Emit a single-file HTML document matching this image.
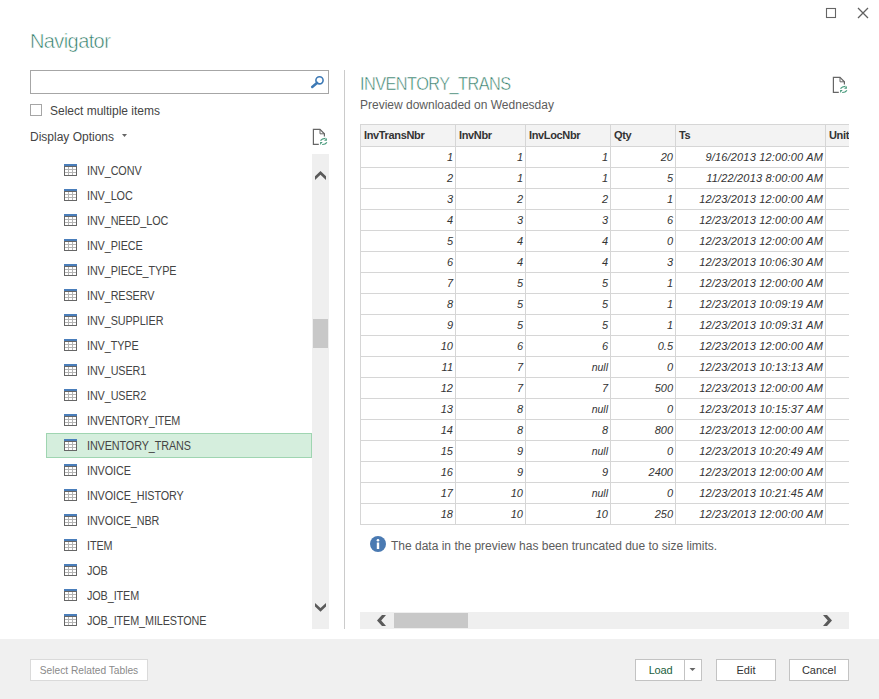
<!DOCTYPE html>
<html><head><meta charset="utf-8">
<style>
*{box-sizing:border-box;margin:0;padding:0}
html,body{width:879px;height:699px;overflow:hidden;background:#fff;font-family:"Liberation Sans",sans-serif;color:#333}
.abs{position:absolute}
#title{position:absolute;left:30px;top:29px;font-size:20px;color:#2f7c67;line-height:24px;white-space:nowrap;letter-spacing:-0.6px;-webkit-text-stroke:0.55px #fff}
#search{position:absolute;left:30px;top:70px;width:299px;height:24px;border:1px solid #a6a6a6;background:#fff}
#cb{position:absolute;left:30px;top:104px;width:12px;height:12px;border:1px solid #a6a6a6}
.lbl{position:absolute;font-size:12px;color:#444;white-space:nowrap;line-height:14px}
#listwrap{position:absolute;left:0;top:154px;width:340px;height:485px;overflow:hidden}
.li{position:absolute;left:46px;width:266px;height:25px}
.li.sel{background:#d5eedd;border:1px solid #9fd5b1}
.li .ti{position:absolute;left:18px;top:6px}
.li.sel .ti{left:17px;top:5px}
.lt{position:absolute;left:41px;top:6px;font-size:12px;line-height:14px;color:#444;white-space:nowrap;letter-spacing:-0.1px;transform-origin:0 0;transform:scaleX(0.9)}
.li.sel .lt{left:40px;top:5px}
#vsb{position:absolute;left:312px;top:154px;width:17px;height:475px;background:#efefef}
#vthumb{position:absolute;left:313px;top:319px;width:15px;height:29px;background:#c8c8c8}
#divider{position:absolute;left:344px;top:70px;width:1px;height:559px;background:#cbcbcb}
#ptitle{position:absolute;left:360px;top:73px;font-size:18px;line-height:22px;color:#2f7c67;letter-spacing:-0.6px;white-space:nowrap;transform-origin:0 0;transform:scaleX(0.905);-webkit-text-stroke:0.5px #fff}
#tbl{position:absolute;left:360px;top:124px;width:489px;height:401px;overflow:hidden}
.th{position:absolute;top:0;height:23px;border-top:1px solid #d6d6d6;background:#f3f3f3;border-left:1px solid #d6d6d6;border-bottom:1px solid #d6d6d6;font-size:11px;font-weight:bold;color:#333;padding:4px 0 0 3px;line-height:12px;white-space:nowrap;letter-spacing:-0.35px}
.td{position:absolute;height:21px;border-left:1px solid #d6d6d6;border-bottom:1px solid #d6d6d6;font-size:11px;font-style:italic;color:#333;text-align:right;padding:4px 2px 0 0;line-height:12px;white-space:nowrap}
.td.null{font-size:10.5px;padding-top:3.5px}
.td.dt{letter-spacing:0.17px}
#info{position:absolute;left:370px;top:536px;width:16px;height:16px;border-radius:50%;background:#4a7ab2}
#hsb{position:absolute;left:360px;top:612px;width:489px;height:17px;background:#efefef}
#hthumb{position:absolute;left:394px;top:613px;width:74px;height:15px;background:#c8c8c8}
#footer{position:absolute;left:0;top:639px;width:879px;height:60px;background:#f0f0f0}
.btn{position:absolute;top:659px;height:22px;background:#fff;border:1px solid #c3c3c3;font-size:11px;color:#333;text-align:center;line-height:20px;white-space:nowrap}
</style></head><body>
<!-- window controls -->
<svg class="abs" style="left:820px;top:0" width="59" height="30" viewBox="0 0 59 30">
<rect x="6.5" y="8.5" width="9" height="9" fill="none" stroke="#656565" stroke-width="1.1"/>
<path d="M38 8L48 18M48 8L38 18" stroke="#606060" stroke-width="1.3"/>
</svg>
<div id="title">Navigator</div>
<div id="search"></div>
<svg class="abs" style="left:308px;top:72px" width="20" height="20" viewBox="0 0 20 20">
<circle cx="11.5" cy="8.3" r="3.6" fill="none" stroke="#3d79b5" stroke-width="1.6"/>
<path d="M9.2 10.8L4.2 15" stroke="#3d79b5" stroke-width="2.5" stroke-linecap="round"/>
</svg>
<div id="cb"></div>
<div class="lbl" style="left:50px;top:104px">Select multiple items</div>
<div class="lbl" style="left:30px;top:130px">Display Options</div>
<svg class="abs" style="left:120px;top:132px" width="10" height="8"><path d="M2 2H7L4.5 4.9Z" fill="#666"/></svg>
<!-- refresh icon left -->
<svg class="abs" style="left:310px;top:126px" width="20" height="22" viewBox="0 0 20 22">
<path d="M8.8 18.4H3.4V3.4H10L14.4 7.8V10.6" fill="none" stroke="#666" stroke-width="1.2"/>
<path d="M10 3.4V7.8H14.4" fill="none" stroke="#666" stroke-width="1"/>
<path d="M10.5 14.6Q12.2 12.2 15.5 12.3" fill="none" stroke="#489a7c" stroke-width="1.2"/>
<path d="M16.9 12V14.8H14Z" fill="#489a7c"/>
<path d="M16.9 16.3Q15.4 18.6 12.2 18.5" fill="none" stroke="#489a7c" stroke-width="1.2"/>
<path d="M10.1 16.1H12.7L10.1 19Z" fill="#489a7c"/>
</svg>
<div id="listwrap">
<div class="li" style="top:4px"><svg class="ti" width="13" height="12" viewBox="0 0 13 12"><rect x="0" y="0" width="13" height="3" fill="#4a7ebb"/><rect x="0.5" y="2.5" width="12" height="9" fill="#fff" stroke="#666"/><path d="M1 5.5H12M1 8.5H12M4.5 3V11M8.5 3V11" stroke="#b4b4b4" stroke-width="1"/></svg><span class="lt">INV_CONV</span></div>
<div class="li" style="top:29px"><svg class="ti" width="13" height="12" viewBox="0 0 13 12"><rect x="0" y="0" width="13" height="3" fill="#4a7ebb"/><rect x="0.5" y="2.5" width="12" height="9" fill="#fff" stroke="#666"/><path d="M1 5.5H12M1 8.5H12M4.5 3V11M8.5 3V11" stroke="#b4b4b4" stroke-width="1"/></svg><span class="lt">INV_LOC</span></div>
<div class="li" style="top:54px"><svg class="ti" width="13" height="12" viewBox="0 0 13 12"><rect x="0" y="0" width="13" height="3" fill="#4a7ebb"/><rect x="0.5" y="2.5" width="12" height="9" fill="#fff" stroke="#666"/><path d="M1 5.5H12M1 8.5H12M4.5 3V11M8.5 3V11" stroke="#b4b4b4" stroke-width="1"/></svg><span class="lt">INV_NEED_LOC</span></div>
<div class="li" style="top:79px"><svg class="ti" width="13" height="12" viewBox="0 0 13 12"><rect x="0" y="0" width="13" height="3" fill="#4a7ebb"/><rect x="0.5" y="2.5" width="12" height="9" fill="#fff" stroke="#666"/><path d="M1 5.5H12M1 8.5H12M4.5 3V11M8.5 3V11" stroke="#b4b4b4" stroke-width="1"/></svg><span class="lt">INV_PIECE</span></div>
<div class="li" style="top:104px"><svg class="ti" width="13" height="12" viewBox="0 0 13 12"><rect x="0" y="0" width="13" height="3" fill="#4a7ebb"/><rect x="0.5" y="2.5" width="12" height="9" fill="#fff" stroke="#666"/><path d="M1 5.5H12M1 8.5H12M4.5 3V11M8.5 3V11" stroke="#b4b4b4" stroke-width="1"/></svg><span class="lt">INV_PIECE_TYPE</span></div>
<div class="li" style="top:129px"><svg class="ti" width="13" height="12" viewBox="0 0 13 12"><rect x="0" y="0" width="13" height="3" fill="#4a7ebb"/><rect x="0.5" y="2.5" width="12" height="9" fill="#fff" stroke="#666"/><path d="M1 5.5H12M1 8.5H12M4.5 3V11M8.5 3V11" stroke="#b4b4b4" stroke-width="1"/></svg><span class="lt">INV_RESERV</span></div>
<div class="li" style="top:154px"><svg class="ti" width="13" height="12" viewBox="0 0 13 12"><rect x="0" y="0" width="13" height="3" fill="#4a7ebb"/><rect x="0.5" y="2.5" width="12" height="9" fill="#fff" stroke="#666"/><path d="M1 5.5H12M1 8.5H12M4.5 3V11M8.5 3V11" stroke="#b4b4b4" stroke-width="1"/></svg><span class="lt">INV_SUPPLIER</span></div>
<div class="li" style="top:179px"><svg class="ti" width="13" height="12" viewBox="0 0 13 12"><rect x="0" y="0" width="13" height="3" fill="#4a7ebb"/><rect x="0.5" y="2.5" width="12" height="9" fill="#fff" stroke="#666"/><path d="M1 5.5H12M1 8.5H12M4.5 3V11M8.5 3V11" stroke="#b4b4b4" stroke-width="1"/></svg><span class="lt">INV_TYPE</span></div>
<div class="li" style="top:204px"><svg class="ti" width="13" height="12" viewBox="0 0 13 12"><rect x="0" y="0" width="13" height="3" fill="#4a7ebb"/><rect x="0.5" y="2.5" width="12" height="9" fill="#fff" stroke="#666"/><path d="M1 5.5H12M1 8.5H12M4.5 3V11M8.5 3V11" stroke="#b4b4b4" stroke-width="1"/></svg><span class="lt">INV_USER1</span></div>
<div class="li" style="top:229px"><svg class="ti" width="13" height="12" viewBox="0 0 13 12"><rect x="0" y="0" width="13" height="3" fill="#4a7ebb"/><rect x="0.5" y="2.5" width="12" height="9" fill="#fff" stroke="#666"/><path d="M1 5.5H12M1 8.5H12M4.5 3V11M8.5 3V11" stroke="#b4b4b4" stroke-width="1"/></svg><span class="lt">INV_USER2</span></div>
<div class="li" style="top:254px"><svg class="ti" width="13" height="12" viewBox="0 0 13 12"><rect x="0" y="0" width="13" height="3" fill="#4a7ebb"/><rect x="0.5" y="2.5" width="12" height="9" fill="#fff" stroke="#666"/><path d="M1 5.5H12M1 8.5H12M4.5 3V11M8.5 3V11" stroke="#b4b4b4" stroke-width="1"/></svg><span class="lt">INVENTORY_ITEM</span></div>
<div class="li sel" style="top:279px"><svg class="ti" width="13" height="12" viewBox="0 0 13 12"><rect x="0" y="0" width="13" height="3" fill="#4a7ebb"/><rect x="0.5" y="2.5" width="12" height="9" fill="#fff" stroke="#666"/><path d="M1 5.5H12M1 8.5H12M4.5 3V11M8.5 3V11" stroke="#b4b4b4" stroke-width="1"/></svg><span class="lt">INVENTORY_TRANS</span></div>
<div class="li" style="top:304px"><svg class="ti" width="13" height="12" viewBox="0 0 13 12"><rect x="0" y="0" width="13" height="3" fill="#4a7ebb"/><rect x="0.5" y="2.5" width="12" height="9" fill="#fff" stroke="#666"/><path d="M1 5.5H12M1 8.5H12M4.5 3V11M8.5 3V11" stroke="#b4b4b4" stroke-width="1"/></svg><span class="lt">INVOICE</span></div>
<div class="li" style="top:329px"><svg class="ti" width="13" height="12" viewBox="0 0 13 12"><rect x="0" y="0" width="13" height="3" fill="#4a7ebb"/><rect x="0.5" y="2.5" width="12" height="9" fill="#fff" stroke="#666"/><path d="M1 5.5H12M1 8.5H12M4.5 3V11M8.5 3V11" stroke="#b4b4b4" stroke-width="1"/></svg><span class="lt">INVOICE_HISTORY</span></div>
<div class="li" style="top:354px"><svg class="ti" width="13" height="12" viewBox="0 0 13 12"><rect x="0" y="0" width="13" height="3" fill="#4a7ebb"/><rect x="0.5" y="2.5" width="12" height="9" fill="#fff" stroke="#666"/><path d="M1 5.5H12M1 8.5H12M4.5 3V11M8.5 3V11" stroke="#b4b4b4" stroke-width="1"/></svg><span class="lt">INVOICE_NBR</span></div>
<div class="li" style="top:379px"><svg class="ti" width="13" height="12" viewBox="0 0 13 12"><rect x="0" y="0" width="13" height="3" fill="#4a7ebb"/><rect x="0.5" y="2.5" width="12" height="9" fill="#fff" stroke="#666"/><path d="M1 5.5H12M1 8.5H12M4.5 3V11M8.5 3V11" stroke="#b4b4b4" stroke-width="1"/></svg><span class="lt">ITEM</span></div>
<div class="li" style="top:404px"><svg class="ti" width="13" height="12" viewBox="0 0 13 12"><rect x="0" y="0" width="13" height="3" fill="#4a7ebb"/><rect x="0.5" y="2.5" width="12" height="9" fill="#fff" stroke="#666"/><path d="M1 5.5H12M1 8.5H12M4.5 3V11M8.5 3V11" stroke="#b4b4b4" stroke-width="1"/></svg><span class="lt">JOB</span></div>
<div class="li" style="top:429px"><svg class="ti" width="13" height="12" viewBox="0 0 13 12"><rect x="0" y="0" width="13" height="3" fill="#4a7ebb"/><rect x="0.5" y="2.5" width="12" height="9" fill="#fff" stroke="#666"/><path d="M1 5.5H12M1 8.5H12M4.5 3V11M8.5 3V11" stroke="#b4b4b4" stroke-width="1"/></svg><span class="lt">JOB_ITEM</span></div>
<div class="li" style="top:454px"><svg class="ti" width="13" height="12" viewBox="0 0 13 12"><rect x="0" y="0" width="13" height="3" fill="#4a7ebb"/><rect x="0.5" y="2.5" width="12" height="9" fill="#fff" stroke="#666"/><path d="M1 5.5H12M1 8.5H12M4.5 3V11M8.5 3V11" stroke="#b4b4b4" stroke-width="1"/></svg><span class="lt">JOB_ITEM_MILESTONE</span></div>
</div>
<div id="vsb"></div>
<div id="vthumb"></div>


<div id="divider"></div>
<div id="ptitle">INVENTORY_TRANS</div>
<div class="lbl" style="left:360px;top:98px;color:#5c5c5c">Preview downloaded on Wednesday</div>
<!-- refresh icon right -->
<svg class="abs" style="left:830px;top:74px" width="20" height="22" viewBox="0 0 20 22">
<path d="M8.8 18.4H3.4V3.4H10L14.4 7.8V10.6" fill="none" stroke="#666" stroke-width="1.2"/>
<path d="M10 3.4V7.8H14.4" fill="none" stroke="#666" stroke-width="1"/>
<path d="M10.5 14.6Q12.2 12.2 15.5 12.3" fill="none" stroke="#489a7c" stroke-width="1.2"/>
<path d="M16.9 12V14.8H14Z" fill="#489a7c"/>
<path d="M16.9 16.3Q15.4 18.6 12.2 18.5" fill="none" stroke="#489a7c" stroke-width="1.2"/>
<path d="M10.1 16.1H12.7L10.1 19Z" fill="#489a7c"/>
</svg>
<div id="tbl">
<div class="th" style="left:0px;width:95px">InvTransNbr</div>
<div class="th" style="left:95px;width:70px">InvNbr</div>
<div class="th" style="left:165px;width:85px">InvLocNbr</div>
<div class="th" style="left:250px;width:65px">Qty</div>
<div class="th" style="left:315px;width:150px">Ts</div>
<div class="th" style="left:465px;width:60px">Unit</div>
<div class="td" style="left:0px;top:23px;width:95px">1</div>
<div class="td" style="left:95px;top:23px;width:70px">1</div>
<div class="td" style="left:165px;top:23px;width:85px">1</div>
<div class="td" style="left:250px;top:23px;width:65px">20</div>
<div class="td dt" style="left:315px;top:23px;width:150px">9/16/2013 12:00:00 AM</div>
<div class="td" style="left:465px;top:23px;width:60px"></div>
<div class="td" style="left:0px;top:44px;width:95px">2</div>
<div class="td" style="left:95px;top:44px;width:70px">1</div>
<div class="td" style="left:165px;top:44px;width:85px">1</div>
<div class="td" style="left:250px;top:44px;width:65px">5</div>
<div class="td dt" style="left:315px;top:44px;width:150px">11/22/2013 8:00:00 AM</div>
<div class="td" style="left:465px;top:44px;width:60px"></div>
<div class="td" style="left:0px;top:65px;width:95px">3</div>
<div class="td" style="left:95px;top:65px;width:70px">2</div>
<div class="td" style="left:165px;top:65px;width:85px">2</div>
<div class="td" style="left:250px;top:65px;width:65px">1</div>
<div class="td dt" style="left:315px;top:65px;width:150px">12/23/2013 12:00:00 AM</div>
<div class="td" style="left:465px;top:65px;width:60px"></div>
<div class="td" style="left:0px;top:86px;width:95px">4</div>
<div class="td" style="left:95px;top:86px;width:70px">3</div>
<div class="td" style="left:165px;top:86px;width:85px">3</div>
<div class="td" style="left:250px;top:86px;width:65px">6</div>
<div class="td dt" style="left:315px;top:86px;width:150px">12/23/2013 12:00:00 AM</div>
<div class="td" style="left:465px;top:86px;width:60px"></div>
<div class="td" style="left:0px;top:107px;width:95px">5</div>
<div class="td" style="left:95px;top:107px;width:70px">4</div>
<div class="td" style="left:165px;top:107px;width:85px">4</div>
<div class="td" style="left:250px;top:107px;width:65px">0</div>
<div class="td dt" style="left:315px;top:107px;width:150px">12/23/2013 12:00:00 AM</div>
<div class="td" style="left:465px;top:107px;width:60px"></div>
<div class="td" style="left:0px;top:128px;width:95px">6</div>
<div class="td" style="left:95px;top:128px;width:70px">4</div>
<div class="td" style="left:165px;top:128px;width:85px">4</div>
<div class="td" style="left:250px;top:128px;width:65px">3</div>
<div class="td dt" style="left:315px;top:128px;width:150px">12/23/2013 10:06:30 AM</div>
<div class="td" style="left:465px;top:128px;width:60px"></div>
<div class="td" style="left:0px;top:149px;width:95px">7</div>
<div class="td" style="left:95px;top:149px;width:70px">5</div>
<div class="td" style="left:165px;top:149px;width:85px">5</div>
<div class="td" style="left:250px;top:149px;width:65px">1</div>
<div class="td dt" style="left:315px;top:149px;width:150px">12/23/2013 12:00:00 AM</div>
<div class="td" style="left:465px;top:149px;width:60px"></div>
<div class="td" style="left:0px;top:170px;width:95px">8</div>
<div class="td" style="left:95px;top:170px;width:70px">5</div>
<div class="td" style="left:165px;top:170px;width:85px">5</div>
<div class="td" style="left:250px;top:170px;width:65px">1</div>
<div class="td dt" style="left:315px;top:170px;width:150px">12/23/2013 10:09:19 AM</div>
<div class="td" style="left:465px;top:170px;width:60px"></div>
<div class="td" style="left:0px;top:191px;width:95px">9</div>
<div class="td" style="left:95px;top:191px;width:70px">5</div>
<div class="td" style="left:165px;top:191px;width:85px">5</div>
<div class="td" style="left:250px;top:191px;width:65px">1</div>
<div class="td dt" style="left:315px;top:191px;width:150px">12/23/2013 10:09:31 AM</div>
<div class="td" style="left:465px;top:191px;width:60px"></div>
<div class="td" style="left:0px;top:212px;width:95px">10</div>
<div class="td" style="left:95px;top:212px;width:70px">6</div>
<div class="td" style="left:165px;top:212px;width:85px">6</div>
<div class="td" style="left:250px;top:212px;width:65px">0.5</div>
<div class="td dt" style="left:315px;top:212px;width:150px">12/23/2013 12:00:00 AM</div>
<div class="td" style="left:465px;top:212px;width:60px"></div>
<div class="td" style="left:0px;top:233px;width:95px">11</div>
<div class="td" style="left:95px;top:233px;width:70px">7</div>
<div class="td null" style="left:165px;top:233px;width:85px">null</div>
<div class="td" style="left:250px;top:233px;width:65px">0</div>
<div class="td dt" style="left:315px;top:233px;width:150px">12/23/2013 10:13:13 AM</div>
<div class="td" style="left:465px;top:233px;width:60px"></div>
<div class="td" style="left:0px;top:254px;width:95px">12</div>
<div class="td" style="left:95px;top:254px;width:70px">7</div>
<div class="td" style="left:165px;top:254px;width:85px">7</div>
<div class="td" style="left:250px;top:254px;width:65px">500</div>
<div class="td dt" style="left:315px;top:254px;width:150px">12/23/2013 12:00:00 AM</div>
<div class="td" style="left:465px;top:254px;width:60px"></div>
<div class="td" style="left:0px;top:275px;width:95px">13</div>
<div class="td" style="left:95px;top:275px;width:70px">8</div>
<div class="td null" style="left:165px;top:275px;width:85px">null</div>
<div class="td" style="left:250px;top:275px;width:65px">0</div>
<div class="td dt" style="left:315px;top:275px;width:150px">12/23/2013 10:15:37 AM</div>
<div class="td" style="left:465px;top:275px;width:60px"></div>
<div class="td" style="left:0px;top:296px;width:95px">14</div>
<div class="td" style="left:95px;top:296px;width:70px">8</div>
<div class="td" style="left:165px;top:296px;width:85px">8</div>
<div class="td" style="left:250px;top:296px;width:65px">800</div>
<div class="td dt" style="left:315px;top:296px;width:150px">12/23/2013 12:00:00 AM</div>
<div class="td" style="left:465px;top:296px;width:60px"></div>
<div class="td" style="left:0px;top:317px;width:95px">15</div>
<div class="td" style="left:95px;top:317px;width:70px">9</div>
<div class="td null" style="left:165px;top:317px;width:85px">null</div>
<div class="td" style="left:250px;top:317px;width:65px">0</div>
<div class="td dt" style="left:315px;top:317px;width:150px">12/23/2013 10:20:49 AM</div>
<div class="td" style="left:465px;top:317px;width:60px"></div>
<div class="td" style="left:0px;top:338px;width:95px">16</div>
<div class="td" style="left:95px;top:338px;width:70px">9</div>
<div class="td" style="left:165px;top:338px;width:85px">9</div>
<div class="td" style="left:250px;top:338px;width:65px">2400</div>
<div class="td dt" style="left:315px;top:338px;width:150px">12/23/2013 12:00:00 AM</div>
<div class="td" style="left:465px;top:338px;width:60px"></div>
<div class="td" style="left:0px;top:359px;width:95px">17</div>
<div class="td" style="left:95px;top:359px;width:70px">10</div>
<div class="td null" style="left:165px;top:359px;width:85px">null</div>
<div class="td" style="left:250px;top:359px;width:65px">0</div>
<div class="td dt" style="left:315px;top:359px;width:150px">12/23/2013 10:21:45 AM</div>
<div class="td" style="left:465px;top:359px;width:60px"></div>
<div class="td" style="left:0px;top:380px;width:95px">18</div>
<div class="td" style="left:95px;top:380px;width:70px">10</div>
<div class="td" style="left:165px;top:380px;width:85px">10</div>
<div class="td" style="left:250px;top:380px;width:65px">250</div>
<div class="td dt" style="left:315px;top:380px;width:150px">12/23/2013 12:00:00 AM</div>
<div class="td" style="left:465px;top:380px;width:60px"></div>
</div>
<div id="info"><svg width="16" height="16" viewBox="0 0 16 16"><circle cx="8" cy="4.3" r="1.3" fill="#fff"/><rect x="6.8" y="6.5" width="2.4" height="6.5" fill="#fff"/></svg></div>
<div class="lbl" style="left:391px;top:539px;color:#5c5c5c">The data in the preview has been truncated due to size limits.</div>
<div id="hsb"></div>
<div id="hthumb"></div>


<svg class="abs" style="left:0;top:0;pointer-events:none" width="879" height="699" viewBox="0 0 879 699">
<path d="M320.5 170.9L315 176.3V180L320.5 174.7L326 180V176.3Z" fill="#5a5a5a"/>
<path d="M315 602.9L320.5 608.1L326 602.9V606.6L320.5 611.8L315 606.6Z" fill="#5a5a5a"/>
<path d="M377 620.5L382 615H386L381.2 620.5L386 626H382Z" fill="#5a5a5a"/>
<path d="M832 620.5L827 615H823L827.8 620.5L823 626H827Z" fill="#5a5a5a"/>
</svg>
<div id="footer"></div>
<div class="btn" style="left:30px;width:118px;border-color:#dadada;color:#8a8a8a;font-size:10.2px;line-height:22px">Select Related Tables</div>
<div class="btn" style="left:635px;width:67px;color:#1c5f40"><span style="position:absolute;left:0;width:49px;text-align:center;letter-spacing:-0.2px">Load</span><span style="position:absolute;left:48px;top:0;width:1px;height:20px;background:#c3c3c3"></span><svg style="position:absolute;left:53px;top:7px" width="8" height="6"><path d="M0.5 1H6.5L3.5 4Z" fill="#666"/></svg></div>
<div class="btn" style="left:716px;width:60px">Edit</div>
<div class="btn" style="left:789px;width:60px">Cancel</div>
</body></html>
